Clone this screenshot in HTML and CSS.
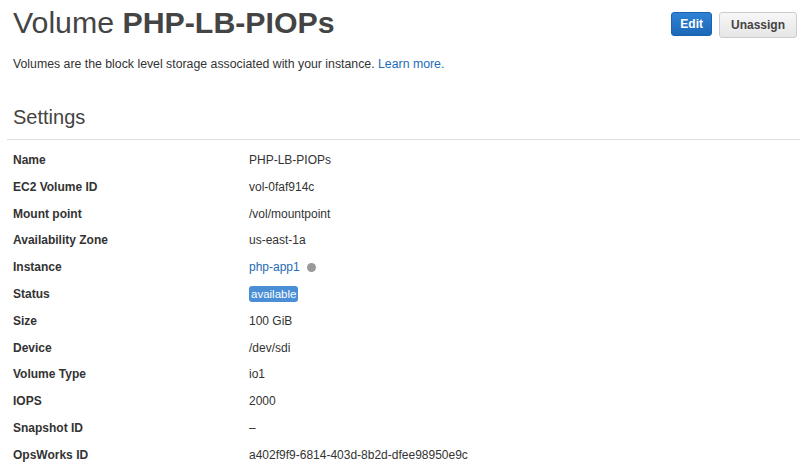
FILE: index.html
```html
<!DOCTYPE html>
<html lang="en">
<head>
  <meta charset="UTF-8" />
  <title>Volume PHP-LB-PIOPs</title>
  <link rel="stylesheet" href="styles.css">
</head>
<body>
  <header class="page-head">
    <h1>Volume <strong>PHP-LB-PIOPs</strong></h1>
    <div class="actions">
      <button class="btn btn-primary">Edit</button>
      <button class="btn">Unassign</button>
    </div>
  </header>
  <p class="intro">Volumes are the block level storage associated with your instance. <a href="#">Learn more.</a></p>

  <section class="settings">
    <h2>Settings</h2>
    <dl class="props">
      <dt>Name</dt><dd>PHP-LB-PIOPs</dd>
      <dt>EC2 Volume ID</dt><dd>vol-0faf914c</dd>
      <dt>Mount point</dt><dd>/vol/mountpoint</dd>
      <dt>Availability Zone</dt><dd>us-east-1a</dd>
      <dt>Instance</dt><dd><a href="#">php-app1</a> <span class="dot"></span></dd>
      <dt>Status</dt><dd><span class="badge">available</span></dd>
      <dt>Size</dt><dd>100 GiB</dd>
      <dt>Device</dt><dd>/dev/sdi</dd>
      <dt>Volume Type</dt><dd>io1</dd>
      <dt>IOPS</dt><dd>2000</dd>
      <dt>Snapshot ID</dt><dd>&ndash;</dd>
      <dt>OpsWorks ID</dt><dd>a402f9f9-6814-403d-8b2d-dfee98950e9c</dd>
    </dl>
  </section>
</body>
</html>
```

FILE: styles.css
```css
body {
  margin: 0;
  font-family: 'Liberation Sans', Arial, sans-serif;
  color: #333;
  background: #fff;
}
a {
  color: #1e6bb8;
  text-decoration: none;
}
.page-head {
  display: flex;
  justify-content: space-between;
  align-items: flex-start;
  padding: 0 3px 0 13px;
}
.page-head h1 {
  margin: 6px 0 0;
  font-size: 30.3px;
  line-height: 34px;
  font-weight: normal;
  color: #444;
}
.page-head h1 strong {
  font-weight: bold;
}
.actions {
  display: flex;
  gap: 7px;
  margin-top: 12px;
}
.btn {
  font-family: 'Liberation Sans', Arial, sans-serif;
  font-size: 12px;
  font-weight: bold;
  height: 26px;
  padding: 0 11px;
  border: 1px solid #ccc;
  border-radius: 3px;
  background: linear-gradient(#f7f7f7, #e6e6e6);
  color: #444;
}
.btn-primary {
  height: 24px;
  padding: 0 8px;
  background: linear-gradient(#2f82d4, #1c68b8);
  border-color: #1a62ad;
  color: #fff;
}
.intro {
  margin: 17px 0 0;
  padding-left: 13px;
  font-size: 12.3px;
}
.settings h2 {
  margin: 34px 0 0 7px;
  padding: 0 0 10px 6px;
  font-size: 20px;
  font-weight: normal;
  color: #444;
  border-bottom: 1px solid #ddd;
  line-height: 24px;
}
.props {
  display: grid;
  grid-template-columns: 236px 1fr;
  margin: 7px 0 0;
  padding-left: 13px;
  font-size: 12px;
  line-height: 26.8px;
}
.props dt {
  font-weight: bold;
}
.props dd {
  margin: 0;
}
.dot {
  display: inline-block;
  width: 9px;
  height: 9px;
  margin-left: 4px;
  border-radius: 50%;
  background: #999;
  vertical-align: -1px;
}
.badge {
  display: inline-block;
  padding: 0 2px;
  font-size: 11.5px;
  line-height: 16px;
  border-radius: 3px;
  background: #4a8fd6;
  color: #fff;
}
```
